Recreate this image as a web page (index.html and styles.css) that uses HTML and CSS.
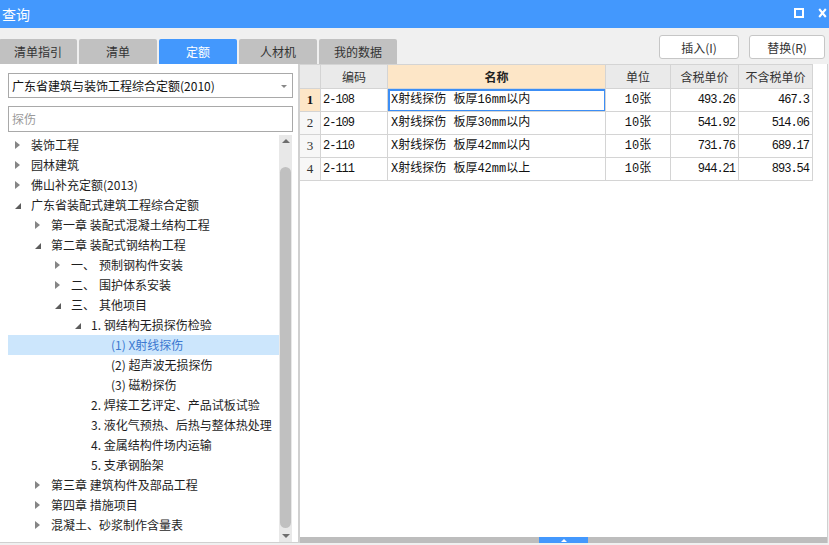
FILE: index.html
```html
<!DOCTYPE html>
<html lang="zh-CN">
<head>
<meta charset="utf-8">
<title>查询</title>
<link rel="stylesheet" href="styles.css">
</head>
<body>
<div class="window">
  <header class="titlebar">
    <span class="title">查询</span>
    <div class="win-ctrls">
      <span class="max-btn"></span>
      <svg class="close-btn" width="9" height="10" viewBox="0 0 9 10"><path d="M1.2 1 L7.8 9 M7.8 1 L1.2 9" stroke="#fff" stroke-width="2" fill="none"/></svg>
    </div>
  </header>

  <div class="toolbar">
    <nav class="tabs">
      <span class="tab">清单指引</span>
      <span class="tab">清单</span>
      <span class="tab active">定额</span>
      <span class="tab">人材机</span>
      <span class="tab">我的数据</span>
    </nav>
    <div class="actions">
      <button class="btn btn-insert">插入(I)</button>
      <button class="btn btn-replace">替换(R)</button>
    </div>
  </div>

  <main class="main">
    <aside class="left">
      <div class="select">广东省建筑与装饰工程综合定额(2010)<span class="caret"></span></div>
      <div class="search">探伤</div>
      <div class="tree-wrap">
        <ul class="tree">
          <li class="l0"><span class="tw"><svg class="ar-c" width="5" height="8" viewBox="0 0 5 8"><polygon points="0,0 5,4 0,8"/></svg></span>装饰工程</li>
          <li class="l0"><span class="tw"><svg class="ar-c" width="5" height="8" viewBox="0 0 5 8"><polygon points="0,0 5,4 0,8"/></svg></span>园林建筑</li>
          <li class="l0"><span class="tw"><svg class="ar-c" width="5" height="8" viewBox="0 0 5 8"><polygon points="0,0 5,4 0,8"/></svg></span>佛山补充定额(2013)</li>
          <li class="l0"><span class="tw"><svg class="ar-e" width="6" height="6" viewBox="0 0 6 6"><polygon points="6,0 6,6 0,6"/></svg></span>广东省装配式建筑工程综合定额</li>
          <li class="l1"><span class="tw"><svg class="ar-c" width="5" height="8" viewBox="0 0 5 8"><polygon points="0,0 5,4 0,8"/></svg></span>第一章 装配式混凝土结构工程</li>
          <li class="l1"><span class="tw"><svg class="ar-e" width="6" height="6" viewBox="0 0 6 6"><polygon points="6,0 6,6 0,6"/></svg></span>第二章 装配式钢结构工程</li>
          <li class="l2"><span class="tw"><svg class="ar-c" width="5" height="8" viewBox="0 0 5 8"><polygon points="0,0 5,4 0,8"/></svg></span><span class="num">一、</span>预制钢构件安装</li>
          <li class="l2"><span class="tw"><svg class="ar-c" width="5" height="8" viewBox="0 0 5 8"><polygon points="0,0 5,4 0,8"/></svg></span><span class="num">二、</span>围护体系安装</li>
          <li class="l2"><span class="tw"><svg class="ar-e" width="6" height="6" viewBox="0 0 6 6"><polygon points="6,0 6,6 0,6"/></svg></span><span class="num">三、</span>其他项目</li>
          <li class="l3"><span class="tw"><svg class="ar-e" width="6" height="6" viewBox="0 0 6 6"><polygon points="6,0 6,6 0,6"/></svg></span>1. 钢结构无损探伤检验</li>
          <li class="l4 selected"><span class="tw"></span>(1) X射线探伤</li>
          <li class="l4"><span class="tw"></span>(2) 超声波无损探伤</li>
          <li class="l4"><span class="tw"></span>(3) 磁粉探伤</li>
          <li class="l3"><span class="tw"></span>2. 焊接工艺评定、产品试板试验</li>
          <li class="l3"><span class="tw"></span>3. 液化气预热、后热与整体热处理</li>
          <li class="l3"><span class="tw"></span>4. 金属结构件场内运输</li>
          <li class="l3"><span class="tw"></span>5. 支承钢胎架</li>
          <li class="l1"><span class="tw"><svg class="ar-c" width="5" height="8" viewBox="0 0 5 8"><polygon points="0,0 5,4 0,8"/></svg></span>第三章 建筑构件及部品工程</li>
          <li class="l1"><span class="tw"><svg class="ar-c" width="5" height="8" viewBox="0 0 5 8"><polygon points="0,0 5,4 0,8"/></svg></span>第四章 措施项目</li>
          <li class="l1"><span class="tw"><svg class="ar-c" width="5" height="8" viewBox="0 0 5 8"><polygon points="0,0 5,4 0,8"/></svg></span>混凝土、砂浆制作含量表</li>
        </ul>
        <div class="vscroll">
          <span class="arrow-up"></span>
          <span class="thumb"></span>
          <span class="arrow-down"></span>
        </div>
      </div>
    </aside>

    <section class="right">
      <div class="grid-area">
        <div class="grid">
          <div class="c hd rn"></div>
          <div class="c hd">编码</div>
          <div class="c hd name-hd">名称</div>
          <div class="c hd">单位</div>
          <div class="c hd">含税单价</div>
          <div class="c hd">不含税单价</div>

          <div class="c rn cur">1</div>
          <div class="c code">2-108</div>
          <div class="c name focus">X射线探伤 板厚16mm以内</div>
          <div class="c unit">10张</div>
          <div class="c price">493.26</div>
          <div class="c price">467.3</div>

          <div class="c rn">2</div>
          <div class="c code">2-109</div>
          <div class="c name">X射线探伤 板厚30mm以内</div>
          <div class="c unit">10张</div>
          <div class="c price">541.92</div>
          <div class="c price">514.06</div>

          <div class="c rn">3</div>
          <div class="c code">2-110</div>
          <div class="c name">X射线探伤 板厚42mm以内</div>
          <div class="c unit">10张</div>
          <div class="c price">731.76</div>
          <div class="c price">689.17</div>

          <div class="c rn">4</div>
          <div class="c code">2-111</div>
          <div class="c name">X射线探伤 板厚42mm以上</div>
          <div class="c unit">10张</div>
          <div class="c price">944.21</div>
          <div class="c price">893.54</div>
        </div>
      </div>
      <div class="hscroll"><span class="hthumb"><span class="hthumb-arrow"></span></span></div>
    </section>
  </main>
</div>
</body>
</html>
```

FILE: styles.css
```css
* { box-sizing: border-box; margin: 0; padding: 0; }
html, body { width: 829px; height: 545px; overflow: hidden; }
body {
  background: #f0f0f0;
  font-family: "Noto Sans CJK SC", "Microsoft YaHei", sans-serif;
  font-size: 12px;
  color: #222;
}
ul { list-style: none; }

/* title bar */
.titlebar {
  height: 28px;
  background: #4398fd;
  color: #fff;
  display: flex;
  align-items: center;
  justify-content: space-between;
}
.title { font-size: 14px; line-height: 28px; padding-left: 2px; }
.win-ctrls { display: flex; align-items: center; gap: 14px; padding-right: 2px; margin-top: -2px; }
.max-btn { width: 10px; height: 10px; border: 2px solid #fff; }
.close-btn { display: block; }

/* toolbar */
.toolbar { height: 36px; display: flex; justify-content: space-between; }
.tabs { display: flex; align-items: flex-end; gap: 2px; margin-left: -1px; }
.tab {
  width: 78px; height: 25px;
  background: #c1c1c1;
  border-radius: 2px 2px 0 0;
  text-align: center;
  line-height: 25px;
  color: #333;
  font-size: 12px;
}
.tab.active { background: #4398fd; color: #fff; }
.actions { display: flex; gap: 10px; padding-top: 7px; padding-right: 4px; }
.btn {
  height: 24px;
  background: #fff;
  border: 1px solid #c6c6c6;
  border-radius: 3px;
  font-family: inherit;
  font-size: 12px;
  color: #333;
}
.btn-insert { width: 80px; }
.btn-replace { width: 76px; }

/* main */
.main { height: 479px; display: flex; }

.left {
  width: 300px;
  background: #fff;
  border-right: 2px solid #d0d0d0;
  border-bottom: 1px solid #d0d0d0;
  padding: 9px 5px 0 8px;
  display: flex;
  flex-direction: column;
}
.select {
  position: relative;
  height: 25px;
  border: 1px solid #a9a9a9;
  padding-left: 3px;
  line-height: 23px;
  color: #111;
}
.caret {
  position: absolute;
  right: 5px; top: 11px;
  border-left: 3px solid transparent;
  border-right: 3px solid transparent;
  border-top: 3px solid #888;
}
.search {
  margin-top: 8px;
  height: 26px;
  border: 1px solid #a9a9a9;
  padding-left: 3px;
  line-height: 24px;
  color: #9a9a9a;
}
.tree-wrap { margin-top: 3px; flex: 1; display: flex; min-height: 0; }
.tree { flex: 1; }
.tree li {
  height: 20px;
  line-height: 20px;
  display: flex;
  align-items: center;
  white-space: nowrap;
  color: #1e1e1e;
}
.tree .l1 { padding-left: 20px; }
.tree .l2 { padding-left: 40px; }
.tree .l3 { padding-left: 60px; }
.tree .l4 { padding-left: 80px; }
.tw { width: 23px; flex: none; display: flex; align-items: center; padding-left: 7px; height: 20px; }
.ar-c { fill: #858585; }
.ar-e { fill: #5c5c5c; margin-top: 2px; }
.num { margin-right: 4px; }
.tree li.selected { background: #cce6fc; color: #3b78d0; }

.vscroll {
  width: 13px;
  margin-right: 1px;
  background: #e8e8e8;
  position: relative;
}
.arrow-up, .arrow-down {
  position: absolute;
  left: 3px;
  border-left: 4px solid transparent;
  border-right: 4px solid transparent;
}
.arrow-up { top: 4px; border-bottom: 4px solid #6e6e6e; }
.arrow-down { bottom: 4px; border-top: 4px solid #6e6e6e; }
.thumb {
  position: absolute;
  left: 1px; right: 1px;
  top: 32px; height: 361px;
  background: #c0c0c0;
  border-radius: 6px;
}

/* right */
.right {
  flex: 1;
  display: flex;
  flex-direction: column;
  background: #fff;
  border-right: 1px solid #d0d0d0;
  margin-right: 1px;
}
.grid-area { flex: 1; }
.grid {
  display: grid;
  grid-template-columns: 21px 67px 218px 65px 68px 74px;
  grid-template-rows: 24px repeat(4, 23px);
  width: 513px;
  border-top: 1px solid #d4d4d4;
}
.c {
  border-right: 1px solid #d4d4d4;
  border-bottom: 1px solid #d4d4d4;
  white-space: nowrap;
  overflow: hidden;
  line-height: 22px;
  font-family: "Liberation Mono", "Noto Sans CJK SC", monospace;
  font-size: 12px;
  color: #111;
}
.c.hd {
  background: #eaeaea;
  text-align: center;
  line-height: 23px;
  font-family: "Noto Sans CJK SC", sans-serif;
  color: #333;
}
.c.name-hd { background: #fde6c7; font-weight: bold; color: #222; }
.c.rn {
  background: #f7f7f7;
  text-align: center;
  font-family: "Liberation Serif", serif;
  font-size: 13px;
  color: #333;
}
.c.hd.rn { background: #eaeaea; }
.c.rn.cur { background: #fde6c7; font-weight: bold; color: #111; }
.c.code { padding-left: 2px; letter-spacing: -1px; }
.c.name { padding-left: 3px; position: relative; }
.c.name.focus::after {
  content: "";
  position: absolute;
  top: 0; left: 0; right: -1px; bottom: -1px;
  border: 2px solid #3c8ef5;
}
.c.unit { text-align: center; }
.c.price { text-align: right; padding-right: 3px; letter-spacing: -1px; }

.hscroll {
  height: 6px;
  background: #bdbdbd;
  display: flex;
  justify-content: center;
}
.hthumb {
  width: 49px;
  background: #4398fd;
  display: flex;
  justify-content: center;
  align-items: center;
}
.hthumb-arrow {
  border-left: 3px solid transparent;
  border-right: 3px solid transparent;
  border-bottom: 3px solid #fff;
}
```
